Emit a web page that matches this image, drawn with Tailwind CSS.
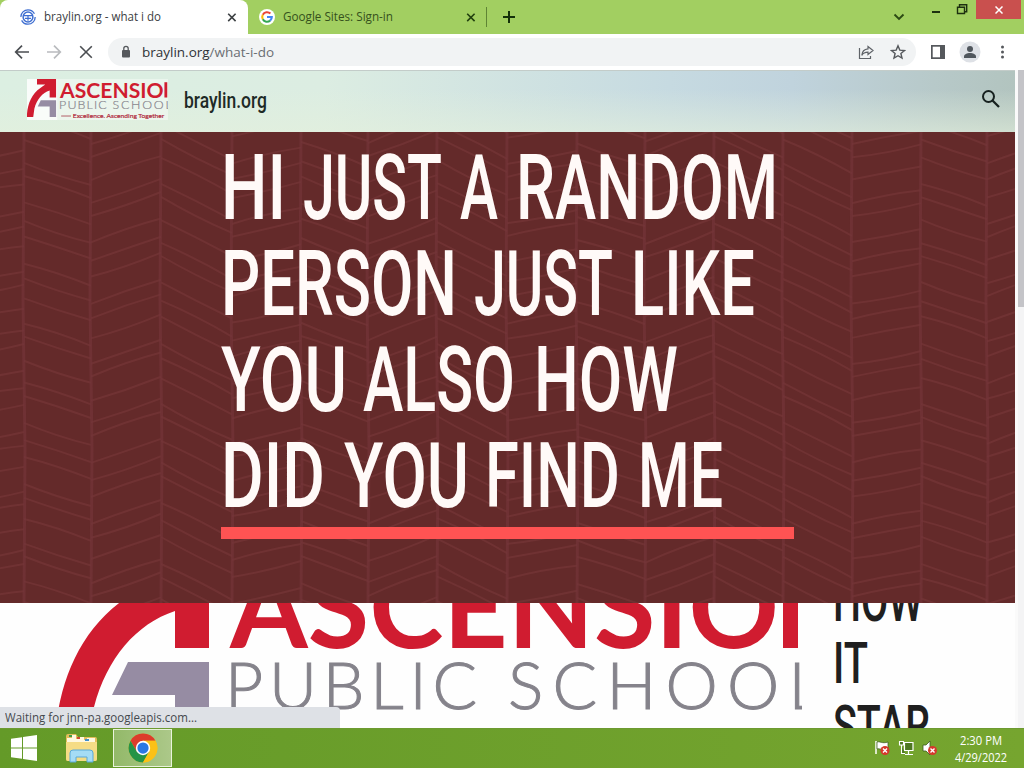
<!DOCTYPE html>
<html lang="en">

<head>
    <meta charset="UTF-8">
    <meta name="viewport" content="width=device-width, initial-scale=1.0">
    <title>braylin.org - what i do</title>
    <script src="https://cdn.jsdelivr.net/npm/@tailwindcss/browser@4"></script>
</head>

<body class="w-[1024px] h-[768px] overflow-hidden flex flex-col bg-white font-['Open_Sans',sans-serif]">
    <!-- Tab strip -->
    <div class="h-[34px] shrink-0 bg-[#a2cf61] flex">
        <div class="w-[248px] bg-white rounded-t-lg flex items-center pl-5 pr-2">
            <svg class="w-4 h-4" viewBox="0 0 16 16" fill="none" stroke="#3f6fd1">
                <circle cx="8" cy="8" r="7.200" stroke-width="1.300" stroke-dasharray="19 3.600" />
                <circle cx="8" cy="8" r="4.900" stroke-width="1.500" />
                <path d="M4 6.700h8M5 9.300h6M8 6.700v5" stroke-width="1.200" />
            </svg>
            <svg class="ml-2 w-[150px] h-5 text-[12px] fill-[#3c4043]">
                <text x="0" y="14" textLength="117" lengthAdjust="spacingAndGlyphs">braylin.org - what i do</text>
            </svg>
            <svg class="ml-auto w-4 h-4" viewBox="0 0 16 16" stroke="#3c4043" stroke-width="1.600">
                <path d="M4.200 4.700l7.400 7.400M11.600 4.700l-7.400 7.400" />
            </svg>
        </div>
        <div class="w-[239px] flex items-center pl-[11px] pr-2">
            <svg class="w-4 h-4" viewBox="0 0 16 16" fill="none" stroke-width="2.100">
                <circle cx="8" cy="8" r="8" fill="#fff" />
                <path d="M11.400 4.600A4.800 4.800 0 0 0 3.800 5.700" stroke="#ea4335" />
                <path d="M3.800 5.700A4.800 4.800 0 0 0 3.800 10.300" stroke="#fbbc05" />
                <path d="M3.800 10.300A4.800 4.800 0 0 0 11.100 11.600" stroke="#34a853" />
                <path d="M11.100 11.600A4.800 4.800 0 0 0 12.800 8H8" stroke="#4285f4" />
            </svg>
            <svg class="ml-2 w-[130px] h-5 text-[12px] fill-[#35511c]">
                <text x="0" y="14" textLength="110" lengthAdjust="spacingAndGlyphs">Google Sites: Sign-in</text>
            </svg>
            <svg class="ml-auto w-4 h-4" viewBox="0 0 16 16" stroke="#22400f" stroke-width="1.600">
                <path d="M4.200 4.700l7.400 7.400M11.600 4.700l-7.400 7.400" />
            </svg>
        </div>
        <div class="w-px h-5 mt-[7px] -ml-px bg-[#5f8434]"></div>
        <svg class="w-4 h-4 ml-[14px] mt-[9px]" viewBox="0 0 16 16" stroke="#14300a" stroke-width="2">
            <path d="M8 2v12M2 8h12" />
        </svg>
        <svg class="w-[14px] h-[10px] ml-auto mt-[12px]" viewBox="0 0 14 10" fill="none" stroke="#2c4a14"
            stroke-width="1.900">
            <path d="M2.500 2.500L7 7l4.500-4.500" />
        </svg>
        <svg class="ml-[22px] w-[44px] h-5" viewBox="0 0 44 20" fill="none" stroke="#1d3010">
            <path d="M4 12h8" stroke-width="2" />
            <path d="M29.500 7.200h7v6.300h-7zM31.500 7V4.700h7.200v7H37" stroke-width="1.400" />
        </svg>
        <div class="ml-[4px] mr-[3px] w-[45px] h-[19px] bg-[#c9504e] flex items-center justify-center">
            <svg class="w-2 h-2" viewBox="0 0 8 8" stroke="#fff" stroke-width="1.500">
                <path d="M.5.5l7 7M7.500.5l-7 7" />
            </svg>
        </div>
    </div>

    <!-- Toolbar -->
    <div class="h-9 shrink-0 bg-white flex items-center px-[14px]">
        <svg class="w-4 h-4" viewBox="0 0 16 16" fill="none" stroke="#4b4e52" stroke-width="1.700">
            <path d="M15 8H2M8 1.700L1.700 8 8 14.300" />
        </svg>
        <svg class="w-4 h-4 ml-4" viewBox="0 0 16 16" fill="none" stroke="#b9bbbe" stroke-width="1.700">
            <path d="M1 8h13M8 1.700L14.300 8 8 14.300" />
        </svg>
        <svg class="w-4 h-4 ml-4" viewBox="0 0 16 16" fill="none" stroke="#4b4e52" stroke-width="1.600">
            <path d="M2.200 2.200l11.600 11.600M13.800 2.200L2.200 13.800" />
        </svg>
        <div class="ml-[14px] w-[808px] h-7 rounded-full bg-[#f1f3f4] flex items-center pl-3 pr-[10px]">
            <svg class="w-[12px] h-[14px]" viewBox="0 0 12 14">
                <rect x="2" y="5" width="8" height="7.500" rx="1" fill="#55585c" />
                <path d="M3.800 5.500V3.600a2.200 2.200 0 0 1 4.400 0v1.900" fill="none" stroke="#55585c" stroke-width="1.300" />
            </svg>
            <svg class="ml-[10px] w-[160px] h-6 text-[13.500px] fill-[#2f3236]">
                <text x="0" y="17" textLength="132" lengthAdjust="spacingAndGlyphs">braylin.org<tspan fill="#6a6e73">/what-i-do</tspan></text>
            </svg>
            <svg class="ml-auto w-4 h-4" viewBox="0 0 16 16" fill="none" stroke="#5f6368" stroke-width="1.200">
                <path d="M1.500 4v10.500h11V12" />
                <path d="M10 2.500l5 4-5 4V8.200c-3 0-5 1-6.200 3.200.3-3.800 2.400-6.200 6.200-6.500z" />
            </svg>
            <svg class="ml-4 w-4 h-4" viewBox="0 0 16 16" fill="none" stroke="#55585c" stroke-width="1.400">
                <path d="M8 1.800l1.800 4.300 4.700.4-3.600 3 1.100 4.600L8 11.700l-4 2.400 1.100-4.600-3.600-3 4.700-.4z" />
            </svg>
        </div>
        <svg class="ml-[15px] w-[14px] h-[14px]" viewBox="0 0 14 14">
            <path d="M0 0h14v14H0z" fill="#55585c" />
            <path d="M1.700 1.700h7.300v10.600H1.700z" fill="#fff" />
        </svg>
        <svg class="ml-[14px] w-[22px] h-[22px]" viewBox="0 0 22 22" fill="#50565d">
            <circle cx="11" cy="11" r="10.500" fill="#dee1e6" />
            <circle cx="11" cy="8" r="3" />
            <path d="M5 17v-1.500c0-2 3-3.500 6-3.500s6 1.500 6 3.500V17z" />
        </svg>
        <svg class="ml-auto w-4 h-4" viewBox="0 0 16 16" fill="#55585c">
            <circle cx="8.500" cy="3" r="1.500" />
            <circle cx="8.500" cy="8" r="1.500" />
            <circle cx="8.500" cy="13" r="1.500" />
        </svg>
    </div>

    <!-- Page -->
    <div class="h-[658px] shrink-0 flex relative">
        <div class="w-[1015px] flex flex-col">
            <!-- Site header -->
            <div
                class="h-[62px] shrink-0 flex items-center border-t border-[#c3ccc9] pl-[27px] pr-[14px] bg-[linear-gradient(to_bottom,transparent_30%,rgba(228,240,220,0.6)),linear-gradient(to_right,#dcefe2,#dcede2_32%,#c6dae1_66%,#c0d3dd_78%,#b7c9c9_92%,#b2c4bf)]">
                <svg class="w-[141px] h-[41px] -mt-1" viewBox="55 550 747 217">
                    <path d="M55 550H802V767H55z" fill="#fff" fill-opacity=".4" />
                    <path d="M55 550H215V767H55z" fill="#fff" fill-opacity=".7" />
                    <g id="logo">
                        <path
                            d="M108 550H209V648H175V611C136 624 107 658 94 707L88 751H54C56 690 76 632 126 598Q138 588 152 579H108z"
                            fill="#d01c30" />
                        <path d="M128 662h81v89h-34v-56h-63z" fill="#968ca3" />
                        <g class="font-['Lato']">
                            <text x="230" y="648" font-size="113" font-weight="700" fill="#d01c30" textLength="549"
                                lengthAdjust="spacingAndGlyphs">ASCENSIO</text>
                            <path d="M783 567h15v81h-15z" fill="#d01c30" />
                            <text x="225" y="709" font-size="66" font-weight="300" fill="#85838b" stroke="#85838b"
                                stroke-width="1" textLength="252" lengthAdjust="spacing">PUBLIC</text>
                            <text x="508" y="709" font-size="66" font-weight="300" fill="#85838b" stroke="#85838b"
                                stroke-width="1" textLength="314" lengthAdjust="spacing">SCHOOL</text>
                            <path d="M236 746h52" stroke="#a0303f" stroke-width="4" />
                            <text x="298" y="757" font-size="34" font-weight="400" fill="#b0263a" stroke="#b0263a"
                                textLength="484" lengthAdjust="spacingAndGlyphs">Excellence. Ascending Together</text>
                        </g>
                    </g>
                </svg>
                <svg class="ml-4 w-[100px] h-8 font-['Roboto'] text-[21.500px] font-medium fill-[#1e2a26]">
                    <text x="0" y="22" textLength="83" lengthAdjust="spacingAndGlyphs">braylin.org</text>
                </svg>
                <svg class="ml-auto -mt-[6px] w-5 h-5" viewBox="0 0 20 20" fill="none" stroke="#17211f" stroke-width="2">
                    <circle cx="7.500" cy="7.500" r="5.500" />
                    <path d="M11.500 11.500l6.500 6.500" stroke-width="2.300" />
                </svg>
            </div>

            <!-- Hero -->
            <div class="h-[471px] shrink-0 relative bg-[#642a2a] overflow-hidden">
                <svg class="absolute inset-0 w-full h-full" viewBox="0 132 1015 471" fill="none">
                    <path id="bricks" stroke="#753638" stroke-width="2" stroke-opacity=".7" />
                    <path id="seams" stroke="#733439" stroke-width="3" stroke-opacity=".7" />
                </svg>
                <svg class="relative block ml-[200px] w-[620px] h-[395px] font-['Roboto'] text-[91.500px] font-medium fill-[#fffaf8]"
                    viewBox="200 132 620 395">
                    <g id="headline"></g>
                </svg>
                <div class="relative ml-[221px] w-[573px] h-3 bg-[#ff5353]"></div>
            </div>

            <!-- Content below the hero -->
            <div class="flex-1 flex overflow-hidden bg-[#fefefe]">
                <svg class="ml-[55px] w-[747px] h-[125px]" viewBox="55 603 747 125">
                    <use href="#logo" />
                </svg>
                <svg class="ml-[28px] w-[150px] h-[125px] font-['Roboto'] text-[57.500px] font-medium fill-[#1f1f1f]"
                    viewBox="830 603 150 125">
                    <text x="833" y="621" textLength="90" lengthAdjust="spacingAndGlyphs">HOW</text>
                    <text x="833" y="683" textLength="35" lengthAdjust="spacingAndGlyphs">IT</text>
                    <text x="833" y="746" textLength="97" lengthAdjust="spacingAndGlyphs">STAR</text>
                </svg>
            </div>
        </div>

        <!-- Scrollbar -->
        <div class="w-[9px] bg-[#f4f4f5] border-l-[3px] border-[#fafafa]">
            <div class="h-[237px] bg-[#c4c4c8]"></div>
        </div>

        <!-- Status bubble -->
        <div class="absolute left-0 bottom-0 w-[340px] h-[21px] bg-[#dee1e6] rounded-tr-sm pl-[5px]">
            <svg class="w-[220px] h-[21px] text-[12px] fill-[#45494d]">
                <text x="0" y="15" textLength="192" lengthAdjust="spacingAndGlyphs">Waiting for jnn-pa.googleapis.com...</text>
            </svg>
        </div>
    </div>

    <!-- Taskbar -->
    <div
        class="h-10 shrink-0 bg-linear-to-r from-[#649a28] to-[#76a52f] border-t border-[#6d9a31] flex items-center pb-[2px]">
        <svg class="ml-[10px] w-[28px] h-[26px]" viewBox="0 0 28 26" fill="#fff">
            <path d="M1 3.800L12 2.200v10.300H1zM13 2L27 0v12.500H13zM1 13.500h11v10.300L1 22.200zM13 13.500h14V26l-14-2z" />
        </svg>
        <svg class="ml-[26px] w-[34px] h-[30px]" viewBox="0 0 34 30">
            <path d="M2 3q0-2 2-2h8l2 3h17q2 0 2 2v20q0 2-2 2H4q-2 0-2-2z" fill="#e3bd5b" />
            <path d="M3 5h5V2h4v4h3V4h5v3h3V5h8v21H3z" fill="#fff8df" />
            <path d="M5 2h3v2H5z" fill="#3f9b48" />
            <path d="M13 4h3v2h-3z" fill="#cf4a35" />
            <path d="M21 6h4v2h-4z" fill="#418ecb" />
            <path d="M2 9h31v17q0 2-2 2H4q-2 0-2-2z" fill="#f5dc85" />
            <path d="M6 29V20q0-3 3-3h17q3 0 3 3v9h-6v-5H12v5z" fill="#a5dcf5" stroke="#5aa9d8" />
        </svg>
        <div
            class="ml-[15px] w-[59px] h-[38px] border border-[#eaf3dc] bg-linear-to-r from-[#93b969] to-[#acc889] flex items-center justify-center">
            <svg class="w-[30px] h-[30px]" viewBox="0 0 48 48">
                <circle cx="24" cy="24" r="23" fill="#fbc116" />
                <path d="M4.080 12.500A23 23 0 0 1 43.920 12.500H24L14 29.800z" fill="#dc3c2c" />
                <path d="M4.080 12.500A23 23 0 0 0 24 47L34 29.750 14 29.750z" fill="#259447" />
                <path d="M24 47A23 23 0 0 0 43.920 12.500H24L34 29.750z" fill="#fbc116" />
                <circle cx="24" cy="24" r="11.500" fill="#fff" />
                <circle cx="24" cy="24" r="9" fill="#2a78e4" />
            </svg>
        </div>
        <svg class="ml-auto w-[64px] h-[18px]" viewBox="874 740 64 18" fill="none">
            <path d="M876 742v13" stroke="#fff" stroke-width="1.500" />
            <path d="M877 743c3-1 5 2 11 0v7c-5 2-8-1-11 0z" fill="#fff" stroke="#355417" stroke-width=".7" />
            <circle cx="885" cy="751.500" r="4.500" fill="#d6382c" />
            <path d="M883 749.500l4 4M887 749.500l-4 4" stroke="#fff" stroke-width="1.400" />
            <path d="M904 744h9v7h-9z" fill="#4d7722" />
            <path d="M904.500 743.500h8.500v8h-8.500zM908.500 752v3M905 755.500h8" stroke="#fff" stroke-width="1.200" />
            <path d="M899.500 742.500h4v3.500h-4zM901.500 746v8.500h3.500" fill="#4d7722" stroke="#fff" stroke-width="1.100" />
            <path d="M923 746h3l4-4v14l-4-4h-3z" fill="#fff" stroke="#3c5c1e" stroke-width=".8" />
            <circle cx="932.500" cy="751.500" r="4.500" fill="#d6382c" />
            <path d="M930.500 749.500l4 4M934.500 749.500l-4 4" stroke="#fff" stroke-width="1.400" />
        </svg>
        <svg class="ml-[12px] mr-[10px] w-[64px] h-[36px] text-[12px] fill-white" viewBox="0 0 64 36">
            <text x="10" y="15" textLength="42" lengthAdjust="spacingAndGlyphs">2:30 PM</text>
            <text x="5" y="32" textLength="52" lengthAdjust="spacingAndGlyphs">4/29/2022</text>
        </svg>
    </div>

    <script>
        // Herringbone: [left, right, rise of the brick lines]
        const columns = [
            [-45, 24, -12], [24, 91, 22], [91, 161, -24], [161, 232, 36], [232, 301, -16], [301, 368, 25],
            [368, 437, -26], [437, 507, 35], [507, 577, -13], [577, 645, 22], [645, 714, -26], [714, 783, 34],
            [783, 852, 34], [852, 921, -13], [921, 987, 22], [987, 1057, -24]
        ];
        let bricks = '';
        let seams = '';
        columns.forEach(([left, right, rise], c) => {
            seams += `M${right} 132L${right - 1} 300L${right + 1} 450L${right} 603`;
            for (let i = 0; i < 28; i++) {
                const y = 100 + i * 20 + Math.sin(i * 2.3 + c * 1.7) * 4;
                const bend = Math.cos(i * 1.9 + c) * 3;
                bricks += `M${left} ${y}Q${(left + right) / 2} ${y + rise / 2 + bend} ${right} ${y + rise}`;
            }
        });
        document.getElementById('bricks').setAttribute('d', bricks);
        document.getElementById('seams').setAttribute('d', seams);

        // Headline words: [text, x, baseline, width]
        const words = [
            ['HI', 221, 219, 65], ['JUST', 303, 219, 139], ['A', 460, 219, 38], ['RANDOM', 516, 219, 262],
            ['PERSON', 221, 315, 236], ['JUST', 474, 315, 139], ['LIKE', 631, 315, 124],
            ['YOU', 221, 411, 126], ['ALSO', 363, 411, 152], ['HOW', 534, 411, 144],
            ['DID', 221, 507, 104], ['YOU', 344, 507, 125], ['FIND', 485, 507, 135], ['ME', 638, 507, 85]
        ];
        document.getElementById('headline').innerHTML = words.map(([text, x, y, width]) =>
            `<text x="${x}" y="${y}" textLength="${width}" lengthAdjust="spacingAndGlyphs">${text}</text>`).join('');
    </script>
</body>

</html>
